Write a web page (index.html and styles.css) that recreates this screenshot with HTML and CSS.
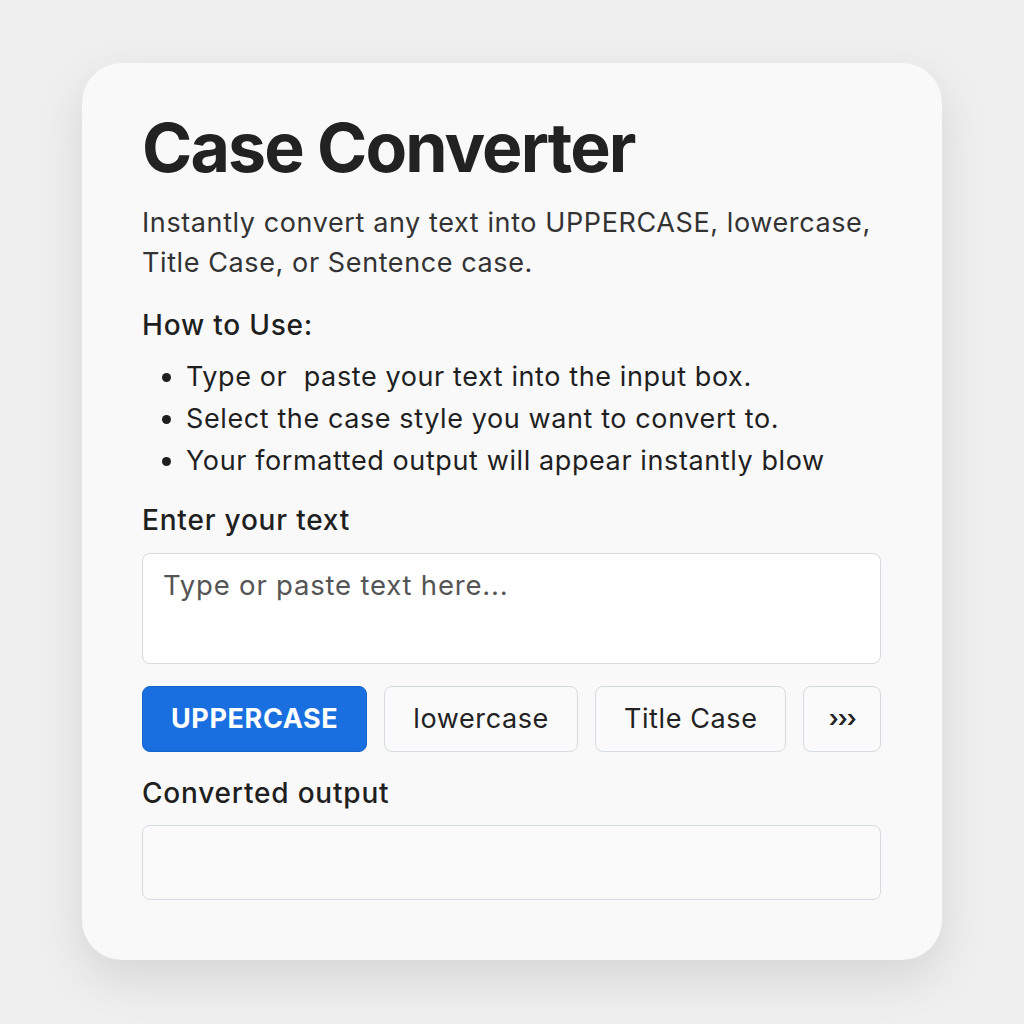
FILE: index.html
```html
<!DOCTYPE html>
<html lang="en">
<head>
    <meta charset="UTF-8">
    <meta name="viewport" content="width=device-width, initial-scale=1.0">
    <title>Case Converter</title>
    <link rel="stylesheet" href="styles.css">
</head>
<body>
    <main class="card">
        <h1 class="title">Case Converter</h1>
        <p class="intro">Instantly convert any text into UPPERCASE, lowercase, Title Case, or Sentence case.</p>

        <!-- How to use -->
        <h2 class="howto">How to Use:</h2>
        <ul class="steps">
            <li>Type or&nbsp; paste your text into the input box.</li>
            <li>Select the case style you want to convert to.</li>
            <li>Your formatted output will appear instantly blow</li>
        </ul>

        <!-- Input -->
        <label class="field-label" for="input-text">Enter your text</label>
        <textarea id="input-text" class="text-box" placeholder="Type or paste text here..."></textarea>

        <div class="buttons">
            <button class="btn active">UPPERCASE</button>
            <button class="btn">lowercase</button>
            <button class="btn">Title Case</button>
            <button class="btn more">›››</button>
        </div>

        <!-- Output -->
        <div class="field-label output-label">Converted output</div>
        <div class="output-box"></div>
    </main>
</body>
</html>
```

FILE: styles.css
```css
body {
    margin: 0;
    padding: 63px 0 0 82px;
    min-height: 100vh;
    box-sizing: border-box;
    background-color: #efefef;
    font-family: Inter, "Noto Sans", sans-serif;
    letter-spacing: 0.6px;
    color: #1f1f1f;
}
.card {
    box-sizing: border-box;
    width: 860px;
    height: 897px;
    padding: 44px 61px 0 60px;
    background-color: #f9f9f9;
    border-radius: 40px;
    box-shadow: 0 18px 48px rgba(0, 0, 0, 0.11);
    display: flex;
    flex-direction: column;
}
.title {
    margin: 0;
    font-size: 68px;
    font-weight: 700;
    line-height: 1.2;
    letter-spacing: -1.9px;
    color: #222;
}
.intro {
    margin: 14px 0 0;
    font-size: 27px;
    line-height: 40px;
    color: #333;
}
.howto {
    margin: 22px 0 0;
    font-size: 28px;
    font-weight: 500;
    line-height: 40px;
    letter-spacing: 0.8px;
}
.steps {
    margin: 11px 0 0;
    padding-left: 44px;
    font-size: 27px;
    line-height: 42px;
}
.field-label {
    margin-top: 18px;
    font-size: 28px;
    font-weight: 500;
    line-height: 40px;
    letter-spacing: 0.8px;
}
.text-box {
    box-sizing: border-box;
    margin-top: 13px;
    height: 111px;
    padding: 14px 20px;
    border: 1.5px solid #d5dbe2;
    border-radius: 8px;
    background-color: #fff;
    font-family: inherit;
    font-size: 27.5px;
    letter-spacing: 0.8px;
    resize: none;
}
.text-box::placeholder {
    color: #555;
}
.buttons {
    display: flex;
    gap: 17px;
    margin-top: 22px;
}
.btn {
    height: 66px;
    padding: 0 28px;
    border: 1.5px solid #d5dbe2;
    border-radius: 8px;
    background-color: #fafafa;
    font-family: inherit;
    font-size: 27px;
    letter-spacing: 0.6px;
    color: #222;
}
.btn.active {
    background-color: #1a6fe0;
    border-color: #1763cc;
    color: #fff;
    font-weight: 700;
}
.btn.more {
    flex: 1;
    padding: 0;
    font-size: 24px;
    font-weight: 600;
    letter-spacing: -1px;
}
.output-label {
    margin-top: 21px;
}
.output-box {
    box-sizing: border-box;
    margin-top: 12px;
    height: 75px;
    border: 1.5px solid #d5dbe2;
    border-radius: 8px;
    background-color: #fafafa;
}
```
